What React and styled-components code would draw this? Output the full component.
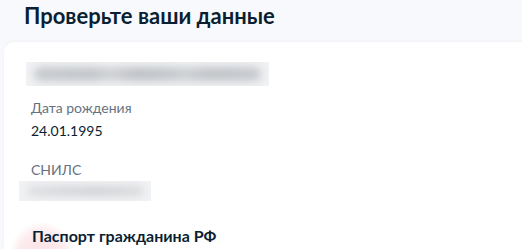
import React from "react";
import styled, { createGlobalStyle } from "styled-components";

const Global = createGlobalStyle`
  html, body { margin: 0; padding: 0; background: #f8f9fc; }
  body { font-family: Lato, "Noto Sans", sans-serif; color: #0b1f33; }
`;

const Page = styled.div`
  width: 522px;
  height: 249px;
  overflow: hidden;
  background: #f8f9fc;
  display: flex;
  flex-direction: column;
`;

const Title = styled.h1`
  margin: 0;
  padding: 2px 0 0 24px;
  font-size: 22px;
  line-height: 28px;
  font-weight: 700;
  color: #0b1f33;
`;

const Card = styled.section`
  margin: 12px 0 0 4px;
  flex: 1;
  background: #fff;
  border-radius: 10px 0 0 0;
  box-shadow: 0 -1px 3px rgba(11, 31, 51, 0.04);
  padding: 20px 0 0 0;
  display: flex;
  flex-direction: column;
`;

const Blurred = styled.div`
  margin-left: ${(p) => p.$left}px;
  margin-top: ${(p) => p.$top || 0}px;
  width: ${(p) => p.$w}px;
  height: ${(p) => p.$h}px;
  background: #f1f2f4;
  display: flex;
  align-items: center;
  padding: 0 8px;
  box-sizing: border-box;
  overflow: hidden;
`;

const BlurFill = styled.span`
  flex: 1;
  height: ${(p) => p.$h}px;
  background: ${(p) => p.$bg};
  filter: blur(4px);
  border-radius: 6px;
`;

const Field = styled.div`
  margin-left: 27px;
  display: flex;
  flex-direction: column;
  gap: 3px;
  margin-top: ${(p) => p.$top}px;
`;

const Label = styled.div`
  font-size: 14px;
  line-height: 20px;
  color: #66727f;
`;

const Value = styled.div`
  font-size: 14px;
  line-height: 20px;
  color: #0b1f33;
`;

const Section = styled.div`
  position: relative;
  margin-top: 25px;
  padding-left: 28px;
`;

const Glow = styled.span`
  position: absolute;
  left: 6px;
  top: -4px;
  width: 64px;
  height: 64px;
  border-radius: 50%;
  background: radial-gradient(circle, rgba(238, 63, 88, 0.16) 0%, rgba(238, 63, 88, 0.1) 50%, rgba(238, 63, 88, 0) 72%);
`;

const SectionTitle = styled.h2`
  position: relative;
  margin: 0;
  font-size: 16px;
  line-height: 20px;
  font-weight: 700;
  color: #0b1f33;
`;

const nameBg =
  "linear-gradient(90deg, #c6c9cd 0%, #c2c5c9 25%, #cfd1d4 34%, #bec1c5 45%, #c4c7cb 60%, #cdd0d3 66%, #c0c3c7 78%, #c6c9cd 100%)";
const snilsBg =
  "linear-gradient(90deg, #dcdee0 0%, #d3d5d8 35%, #cfd1d4 60%, #d8dadc 100%)";

export default function App() {
  return (
    <Page>
      <Global />
      <Title>Проверьте ваши данные</Title>
      <Card>
        <Blurred $left={22} $w={243} $h={24}>
          <BlurFill $h={14} $bg={nameBg} />
        </Blurred>
        <Field $top={12}>
          <Label>Дата рождения</Label>
          <Value>24.01.1995</Value>
        </Field>
        <Field $top={19}>
          <Label>СНИЛС</Label>
        </Field>
        <Blurred $left={15} $w={132} $h={20} $top={1}>
          <BlurFill $h={10} $bg={snilsBg} />
        </Blurred>
        <Section>
          <Glow />
          <SectionTitle>Паспорт гражданина РФ</SectionTitle>
        </Section>
      </Card>
    </Page>
  );
}
